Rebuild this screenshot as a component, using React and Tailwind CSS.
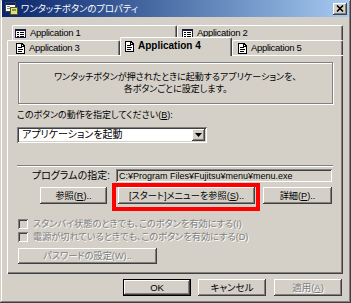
import React from "react";

const raised =
  "bg-[#d4d0c8] shadow-[inset_-1px_-1px_#404040,inset_1px_1px_#fff,inset_-2px_-2px_#808080,inset_2px_2px_#d4d0c8]";
const sunken =
  "shadow-[inset_1px_1px_#808080,inset_-1px_-1px_#fff,inset_2px_2px_#404040,inset_-2px_-2px_#d4d0c8]";
const disabled = "text-[#808080] [text-shadow:1px_1px_0_#fff]";

function AppIcon() {
  return (
    <svg width="13" height="13" viewBox="0 0 13 13" shapeRendering="crispEdges">
      <rect x="0.5" y="0.5" width="10" height="9" fill="#fff" stroke="#404040" />
      <rect x="1" y="1" width="9" height="2" fill="#0a246a" />
      <rect x="2" y="4" width="3" height="1" fill="#808080" />
      <rect x="2" y="6" width="3" height="1" fill="#808080" />
      <rect x="5.5" y="5.5" width="7" height="7" fill="#e8dc78" stroke="#5a5a20" />
      <rect x="7" y="7" width="4" height="2" fill="#6aa050" />
    </svg>
  );
}

function ListIcon() {
  return (
    <svg width="11" height="9" viewBox="0 0 11 9" shapeRendering="crispEdges">
      <rect x="0.5" y="0.5" width="10" height="8" fill="#fff" stroke="#1a1a40" />
      <rect x="1" y="1" width="9" height="1" fill="#1a1a40" />
      <rect x="2" y="3" width="2" height="1" fill="#000" />
      <rect x="5" y="3" width="4" height="1" fill="#000" />
      <rect x="2" y="5" width="2" height="1" fill="#000" />
      <rect x="5" y="5" width="4" height="1" fill="#000" />
      <rect x="2" y="7" width="2" height="1" fill="#000" />
      <rect x="5" y="7" width="4" height="1" fill="#000" />
    </svg>
  );
}

function DocIcon() {
  return (
    <svg width="9" height="11" viewBox="0 0 9 11" shapeRendering="crispEdges">
      <path d="M0.5 0.5H6L8.5 3V10.5H0.5Z" fill="#fff" stroke="#000" />
      <path d="M5.5 0.5V3.5H8.5" fill="none" stroke="#000" />
      <rect x="2" y="4" width="4" height="1" fill="#000" />
      <rect x="2" y="6" width="5" height="1" fill="#000" />
      <rect x="2" y="8" width="4" height="1" fill="#000" />
    </svg>
  );
}

function Tab({ className, icon, children }) {
  return (
    <div
      className={
        "flex items-center gap-[4px] border-t border-l border-white border-r border-r-[#404040] rounded-t-[2px] shadow-[inset_-1px_0_#808080] font-['Liberation_Sans',sans-serif] text-[9.5px] tracking-[-0.3px] " +
        className
      }
    >
      {icon}
      <span>{children}</span>
    </div>
  );
}

function Button({ className, children, isDefault }) {
  if (isDefault) {
    return (
      <div className={"border border-black " + className}>
        <div className={"h-full flex items-center justify-center " + raised}>{children}</div>
      </div>
    );
  }
  return <div className={"flex items-center justify-center " + raised + " " + className}>{children}</div>;
}

function Check({ children }) {
  return (
    <div className="h-[13px] flex items-center ml-[1px]">
      <div className={"w-[10px] h-[10px] bg-[#d4d0c8] " + sunken} />
      <span className={"ml-[5px] text-[9.2px] " + disabled}>{children}</span>
    </div>
  );
}

export default function App() {
  return (
    <div className="w-[351px] h-[303px] overflow-hidden bg-[#d4d0c8] px-[2px] flex flex-col font-['Liberation_Sans','Noto_Sans_CJK_JP',sans-serif] [font-feature-settings:'palt'] text-[9.2px] leading-[12px] text-black shadow-[inset_-1px_-1px_#404040,inset_1px_1px_#d4d0c8,inset_-2px_-2px_#808080,inset_2px_2px_#fff]">
      {/* title bar */}
      <div className="h-[17px] shrink-0 flex items-center bg-linear-to-r from-[#0a246a] to-[#a6caf0] pl-[3px] pr-[2px]">
        <AppIcon />
        <span className="ml-[3px] text-white text-[9.4px]">ワンタッチボタンのプロパティ</span>
        <div className={"ml-auto w-[14px] h-[12px] flex items-center justify-center " + raised}>
          <svg width="8" height="7" viewBox="0 0 8 7">
            <path d="M1 0.5L7 6.5M7 0.5L1 6.5" stroke="#000" strokeWidth="1.6" />
          </svg>
        </div>
      </div>

      {/* tabs */}
      <div className="mt-[8px] ml-[5px] w-[336px]">
        <div className="flex pl-[5px] h-[15px]">
          <Tab className="w-[165px] pl-[2px]" icon={<ListIcon />}>Application 1</Tab>
          <Tab className="w-[166px] pl-[4px]" icon={<ListIcon />}>Application 2</Tab>
        </div>
        <div className="flex items-end -mt-[3px]">
          <Tab className="w-[113px] h-[15px] pl-[8px]" icon={<DocIcon />}>Application 3</Tab>
          <div className="relative z-10 w-[112px] h-[19px] -mb-[1px] pb-[2px] flex items-center gap-[4px] pl-[4px] bg-[#d4d0c8] border-t border-l border-white border-r border-r-[#404040] rounded-t-[2px] shadow-[inset_-1px_0_#808080] font-['Liberation_Sans',sans-serif] text-[10px] font-bold">
            <DocIcon />
            <span>Application 4</span>
          </div>
          <Tab className="w-[111px] h-[15px] pl-[5px]" icon={<DocIcon />}>Application 5</Tab>
        </div>

        {/* panel */}
        <div className="h-[219px] px-[10px] pt-[7px] flex flex-col shadow-[inset_1px_1px_#fff,inset_-1px_-1px_#404040,inset_-2px_-2px_#808080]">
          <div className="ml-[1px] w-[315px] h-[42px] flex flex-col items-center justify-center text-[9px] border border-[#808080] shadow-[inset_1px_1px_#fff,1px_1px_#fff]">
            <div>ワンタッチボタンが押されたときに起動するアプリケーションを、</div>
            <div>各ボタンごとに設定します。</div>
          </div>

          <div className="mt-[5px] h-[12px] text-[9px]">
            このボタンの動作を指定してください(<span className="underline">B</span>):
          </div>

          <div className={"mt-[6px] w-[190px] h-[16px] bg-white flex items-center p-[2px] " + sunken}>
            <span className="flex-1 pl-[3px] text-[10px]">アプリケーションを起動</span>
            <div className={"w-[13px] h-full flex items-center justify-center " + raised}>
              <svg width="7" height="4" viewBox="0 0 7 4">
                <path d="M0 0H7L3.5 4Z" fill="#000" />
              </svg>
            </div>
          </div>

          <div className="mt-[22px] h-[2px] border-t border-[#808080] border-b border-b-white" />

          <div className="mt-[2px] h-[13px] flex items-center">
            <span className="w-[93px] text-right text-[10px]">プログラムの指定:</span>
            <div className={"ml-[6px] w-[216px] h-full flex items-center pl-[3px] bg-[#d4d0c8] " + sunken}>
              <span className="text-[9px] font-['Liberation_Sans',sans-serif]">
                C:¥Program Files¥Fujitsu¥menu¥menu.exe
              </span>
            </div>
          </div>

          <div className="mt-[5px] h-[17px] flex">
            <Button className="ml-[23px] w-[67px]">
              参照(<span className="underline">R</span>)..
            </Button>
            <div className="relative ml-[11px] w-[137px]">
              <Button className="w-full h-full">
                [スタート]メニューを参照(<span className="underline">S</span>)..
              </Button>
              <div className="absolute left-[-6px] right-[-5px] top-[-4px] bottom-[-7px] border-[4px] border-[#f00]" />
            </div>
            <Button className="ml-[8px] w-[69px]">
              詳細(<span className="underline">P</span>)..
            </Button>
          </div>

          <div className="mt-[13px]">
            <Check>スタンバイ状態のときでも、このボタンを有効にする(I)</Check>
            <Check>電源が切れているときでも、このボタンを有効にする(D)</Check>
          </div>

          <Button className={"mt-[5px] ml-[1px] w-[139px] h-[16px] " + disabled}>
            パスワードの設定(W)..
          </Button>
        </div>
      </div>

      {/* dialog buttons */}
      <div className="mt-[5px] h-[17px] flex justify-end pr-[7px] text-[9.5px]">
        <Button isDefault className="w-[68px] mr-[7px]">OK</Button>
        <Button className="w-[68px] mr-[8px]">キャンセル</Button>
        <Button className={"w-[68px] " + disabled}>
          適用(<span className="underline">A</span>)
        </Button>
      </div>
    </div>
  );
}
